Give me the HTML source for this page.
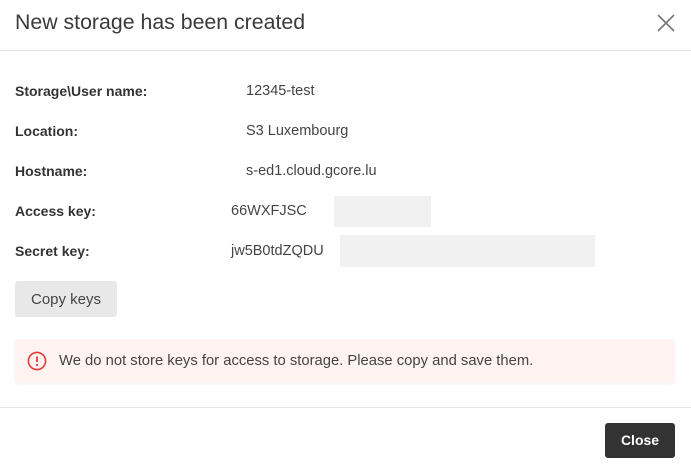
<!DOCTYPE html>
<html><head><style>
body{margin:0;width:691px;height:472px;background:#fff;font-family:"Liberation Sans",sans-serif;position:relative;overflow:hidden;color:#333}
.a{position:absolute;white-space:nowrap}
.t{left:15px;top:10px;font-size:21.3px;color:#3a3a3a}
.hr{position:absolute;left:0;width:691px;height:1px;background:#e4e4e4}
.l{left:15px;font-size:14px;font-weight:bold;color:#333}
.v{font-size:14.5px;color:#444}
.blur{position:absolute;background:#f1f1f1}
</style></head><body>
<div class="a t">New storage has been created</div>
<svg class="a" style="left:656px;top:13px" width="20" height="20" viewBox="0 0 20 20"><path d="M2 2L18 18M18 2L2 18" stroke="#777" stroke-width="1.6"/></svg>
<div class="hr" style="top:50px"></div>
<div class="a l" style="top:83px">Storage\User name:</div><div class="a v" style="left:246px;top:83px">12345-test</div>
<div class="a l" style="top:123px">Location:</div><div class="a v" style="left:246px;top:123px">S3 Luxembourg</div>
<div class="a l" style="top:163px">Hostname:</div><div class="a v" style="left:246px;top:163px">s-ed1.cloud.gcore.lu</div>
<div class="a l" style="top:203px">Access key:</div><div class="a v" style="left:231px;top:203px">66WXFJSC</div>
<div class="blur" style="left:334px;top:196px;width:97px;height:31px"></div>
<div class="a l" style="top:243px">Secret key:</div><div class="a v" style="left:231px;top:243px">jw5B0tdZQDU</div>
<div class="blur" style="left:340px;top:235px;width:255px;height:32px"></div>
<div class="a" style="left:15px;top:281px;width:102px;height:36px;background:#e8e8e8;border-radius:3px;font-size:15px;line-height:37px;text-align:center;color:#444">Copy keys</div>
<div class="a" style="left:15px;top:339px;width:660px;height:44px;background:#fff3f1;border-radius:3px;box-shadow:0 1px 2px rgba(0,0,0,.06)"></div>
<svg class="a" style="left:27px;top:351px" width="20" height="20" viewBox="0 0 20 20"><circle cx="10" cy="10" r="8.6" fill="none" stroke="#e53935" stroke-width="1.6"/><path d="M10 5.5V11" stroke="#e53935" stroke-width="1.8"/><circle cx="10" cy="14" r="1.1" fill="#e53935"/></svg>
<div class="a" style="left:59px;top:353px;font-size:14.8px;color:#444">We do not store keys for access to storage. Please copy and save them.</div>
<div class="hr" style="top:407px"></div>
<div class="a" style="left:605px;top:423px;width:70px;height:35px;background:#333;border-radius:3px;color:#fff;font-weight:bold;font-size:14px;line-height:35px;text-align:center">Close</div>
</body></html>
